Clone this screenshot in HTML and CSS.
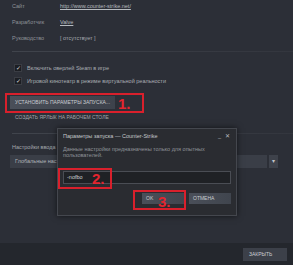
FILE: index.html
```html
<html>
    <head>
        <meta charset="UTF-8">
        <title>Свойства игры</title>
        <link rel="stylesheet" href="styles.css">
    </head>
    <body>
        <div class="window">
            <div class="main">
                <div class="info">
                    <span class="label">Сайт</span><span class="link">http://www.counter-strike.net/</span>
                    <span class="label">Разработчик</span><span class="link">Valve</span>
                    <span class="label">Руководство</span><span class="value">[ отсутствует ]</span>
                </div>
                <div class="sep"></div>
                <div class="check first"><span class="box">✓</span>Включить оверлей Steam в игре</div>
                <div class="check"><span class="box">✓</span>Игровой кинотеатр в режиме виртуальной реальности</div>
                <div class="launch"><div class="btn">УСТАНОВИТЬ ПАРАМЕТРЫ ЗАПУСКА...</div></div>
                <div class="shortcut">СОЗДАТЬ ЯРЛЫК НА РАБОЧЕМ СТОЛЕ</div>
                <div class="sep sep2"></div>
                <div class="input-label">Настройки ввода :</div>
                <div class="select-row">
                    <div class="select">Глобальные настройки</div>
                    <div class="arrow">▾</div>
                </div>
            </div>
            <div class="footer">
                <div class="btn close">ЗАКРЫТЬ</div>
            </div>

            <div class="dialog">
                <div class="dlg-head">
                    <span>Параметры запуска — Counter-Strike</span>
                    <span class="ctrls"><span>_</span><span>✕</span></span>
                </div>
                <p class="dlg-text">Данные настройки предназначены только для опытных пользователей.</p>
                <div class="field">-nofbo</div>
                <div class="dlg-btns">
                    <div class="btn dlg-btn">OK</div>
                    <div class="btn dlg-btn">ОТМЕНА</div>
                </div>
            </div>

            <div class="mark mark1"><span>1.</span></div>
            <div class="mark mark2"><span>2.</span></div>
            <div class="mark mark3"><span>3.</span></div>
        </div>
    </body>
</html>
```

FILE: styles.css
```css
html, body {
    margin: 0;
    padding: 0;
    width: 100%;
    height: 100%;
    overflow: hidden;
}
body {
    background: #2b2e35;
    font-family: "Liberation Sans", Arial, sans-serif;
    font-size: 5.5px;
    color: #a4a8ae;
}
.window {
    position: relative;
    height: 265px;
    display: flex;
    flex-direction: column;
}
.main {
    flex: 1;
    padding-left: 12px;
    background: #2c2f37;
}
.info {
    display: grid;
    grid-template-columns: 48px auto;
    row-gap: 4px;
    line-height: 12px;
}
.label {
    color: #8e9298;
}
.link {
    color: #b6babf;
    text-decoration: underline;
    justify-self: start;
}
.value {
    color: #a4a8ae;
}
.sep {
    height: 1px;
    margin-top: 7px;
    background: linear-gradient(to right, #40444c, #383b43 60%, #33363e);
}
.sep2 {
    margin-top: 12px;
}
.check {
    display: flex;
    align-items: center;
    gap: 5px;
    height: 10px;
    margin-top: 3px;
    padding-left: 2px;
    color: #a9adb3;
}
.check.first {
    margin-top: 11px;
}
.box {
    width: 6px;
    height: 6px;
    background: #1c1e23;
    border: 1px solid #3a3d44;
    color: #d6d8da;
    font-size: 6px;
    line-height: 6px;
    text-align: center;
}
.launch {
    margin-top: 10px;
    margin-left: -2px;
}
.btn {
    height: 13px;
    line-height: 13px;
    color: #c9ccd0;
    font-size: 5px;
    background: linear-gradient(to right, #4a4f59, #3d424b);
}
.launch .btn {
    width: 100px;
    padding-left: 5px;
}
.shortcut {
    margin-top: 4px;
    padding-left: 3px;
    line-height: 8px;
    font-size: 5px;
    color: #a0a4aa;
}
.input-label {
    margin-top: 9px;
    line-height: 8px;
    color: #a4a8ae;
}
.select-row {
    display: flex;
    gap: 2px;
    margin-top: 4px;
    margin-left: -2px;
    margin-right: 15px;
}
.select {
    flex: 1;
    height: 13px;
    line-height: 13px;
    padding-left: 5px;
    background: #3a3e47;
    color: #b0b4b9;
}
.arrow {
    width: 9px;
    height: 13px;
    line-height: 13px;
    text-align: center;
    background: #3e424b;
    color: #c2c5c9;
    font-size: 6px;
}
.footer {
    height: 22px;
    background: #24272d;
    display: flex;
    justify-content: flex-end;
    align-items: center;
    padding-right: 6px;
}
.footer .close {
    width: 38px;
    padding-left: 6px;
    background: #3c4049;
}

/* dialog over the page */
.dialog {
    position: absolute;
    left: 57px;
    top: 128px;
    width: 168px;
    height: 78px;
    padding: 4px 5px;
    background: #2a2c31;
    border: 1px solid #44474e;
    box-shadow: 0 0 6px rgba(0, 0, 0, 0.6);
}
.dlg-head {
    display: flex;
    justify-content: space-between;
    line-height: 7px;
    color: #c4c7cb;
}
.ctrls {
    display: flex;
    gap: 4px;
    padding-right: 1px;
    color: #b8bbbf;
}
.dlg-text {
    margin: 6px 0 0 0;
    width: 150px;
    line-height: 6px;
    color: #8f9399;
}
.field {
    margin-top: 13px;
    height: 11px;
    line-height: 11px;
    padding-left: 3px;
    background: #1f2125;
    border: 1px solid #4a4d54;
    color: #d0d2d5;
}
.dlg-btns {
    display: flex;
    justify-content: flex-end;
    gap: 5px;
    margin-top: 9px;
}
.dlg-btn {
    width: 38px;
    height: 11px;
    line-height: 11px;
    padding-left: 4px;
    background: linear-gradient(to right, #4a4f59, #40454e);
}

/* red annotations */
.mark {
    position: absolute;
    border: 2px solid #d9202c;
    box-sizing: border-box;
}
.mark span {
    position: absolute;
    color: #e3252f;
    font-family: "Liberation Sans", Arial, sans-serif;
    font-weight: bold;
    font-size: 15px;
    line-height: 15px;
}
.mark1 {
    left: 5px;
    top: 93px;
    width: 139px;
    height: 20px;
}
.mark1 span {
    left: 111px;
    top: 1px;
}
.mark2 {
    left: 58px;
    top: 168px;
    width: 54px;
    height: 21px;
}
.mark2 span {
    left: 32px;
    top: 1px;
}
.mark3 {
    left: 133px;
    top: 190px;
    width: 53px;
    height: 20px;
}
.mark3 span {
    left: 23px;
    top: 2px;
}
```
